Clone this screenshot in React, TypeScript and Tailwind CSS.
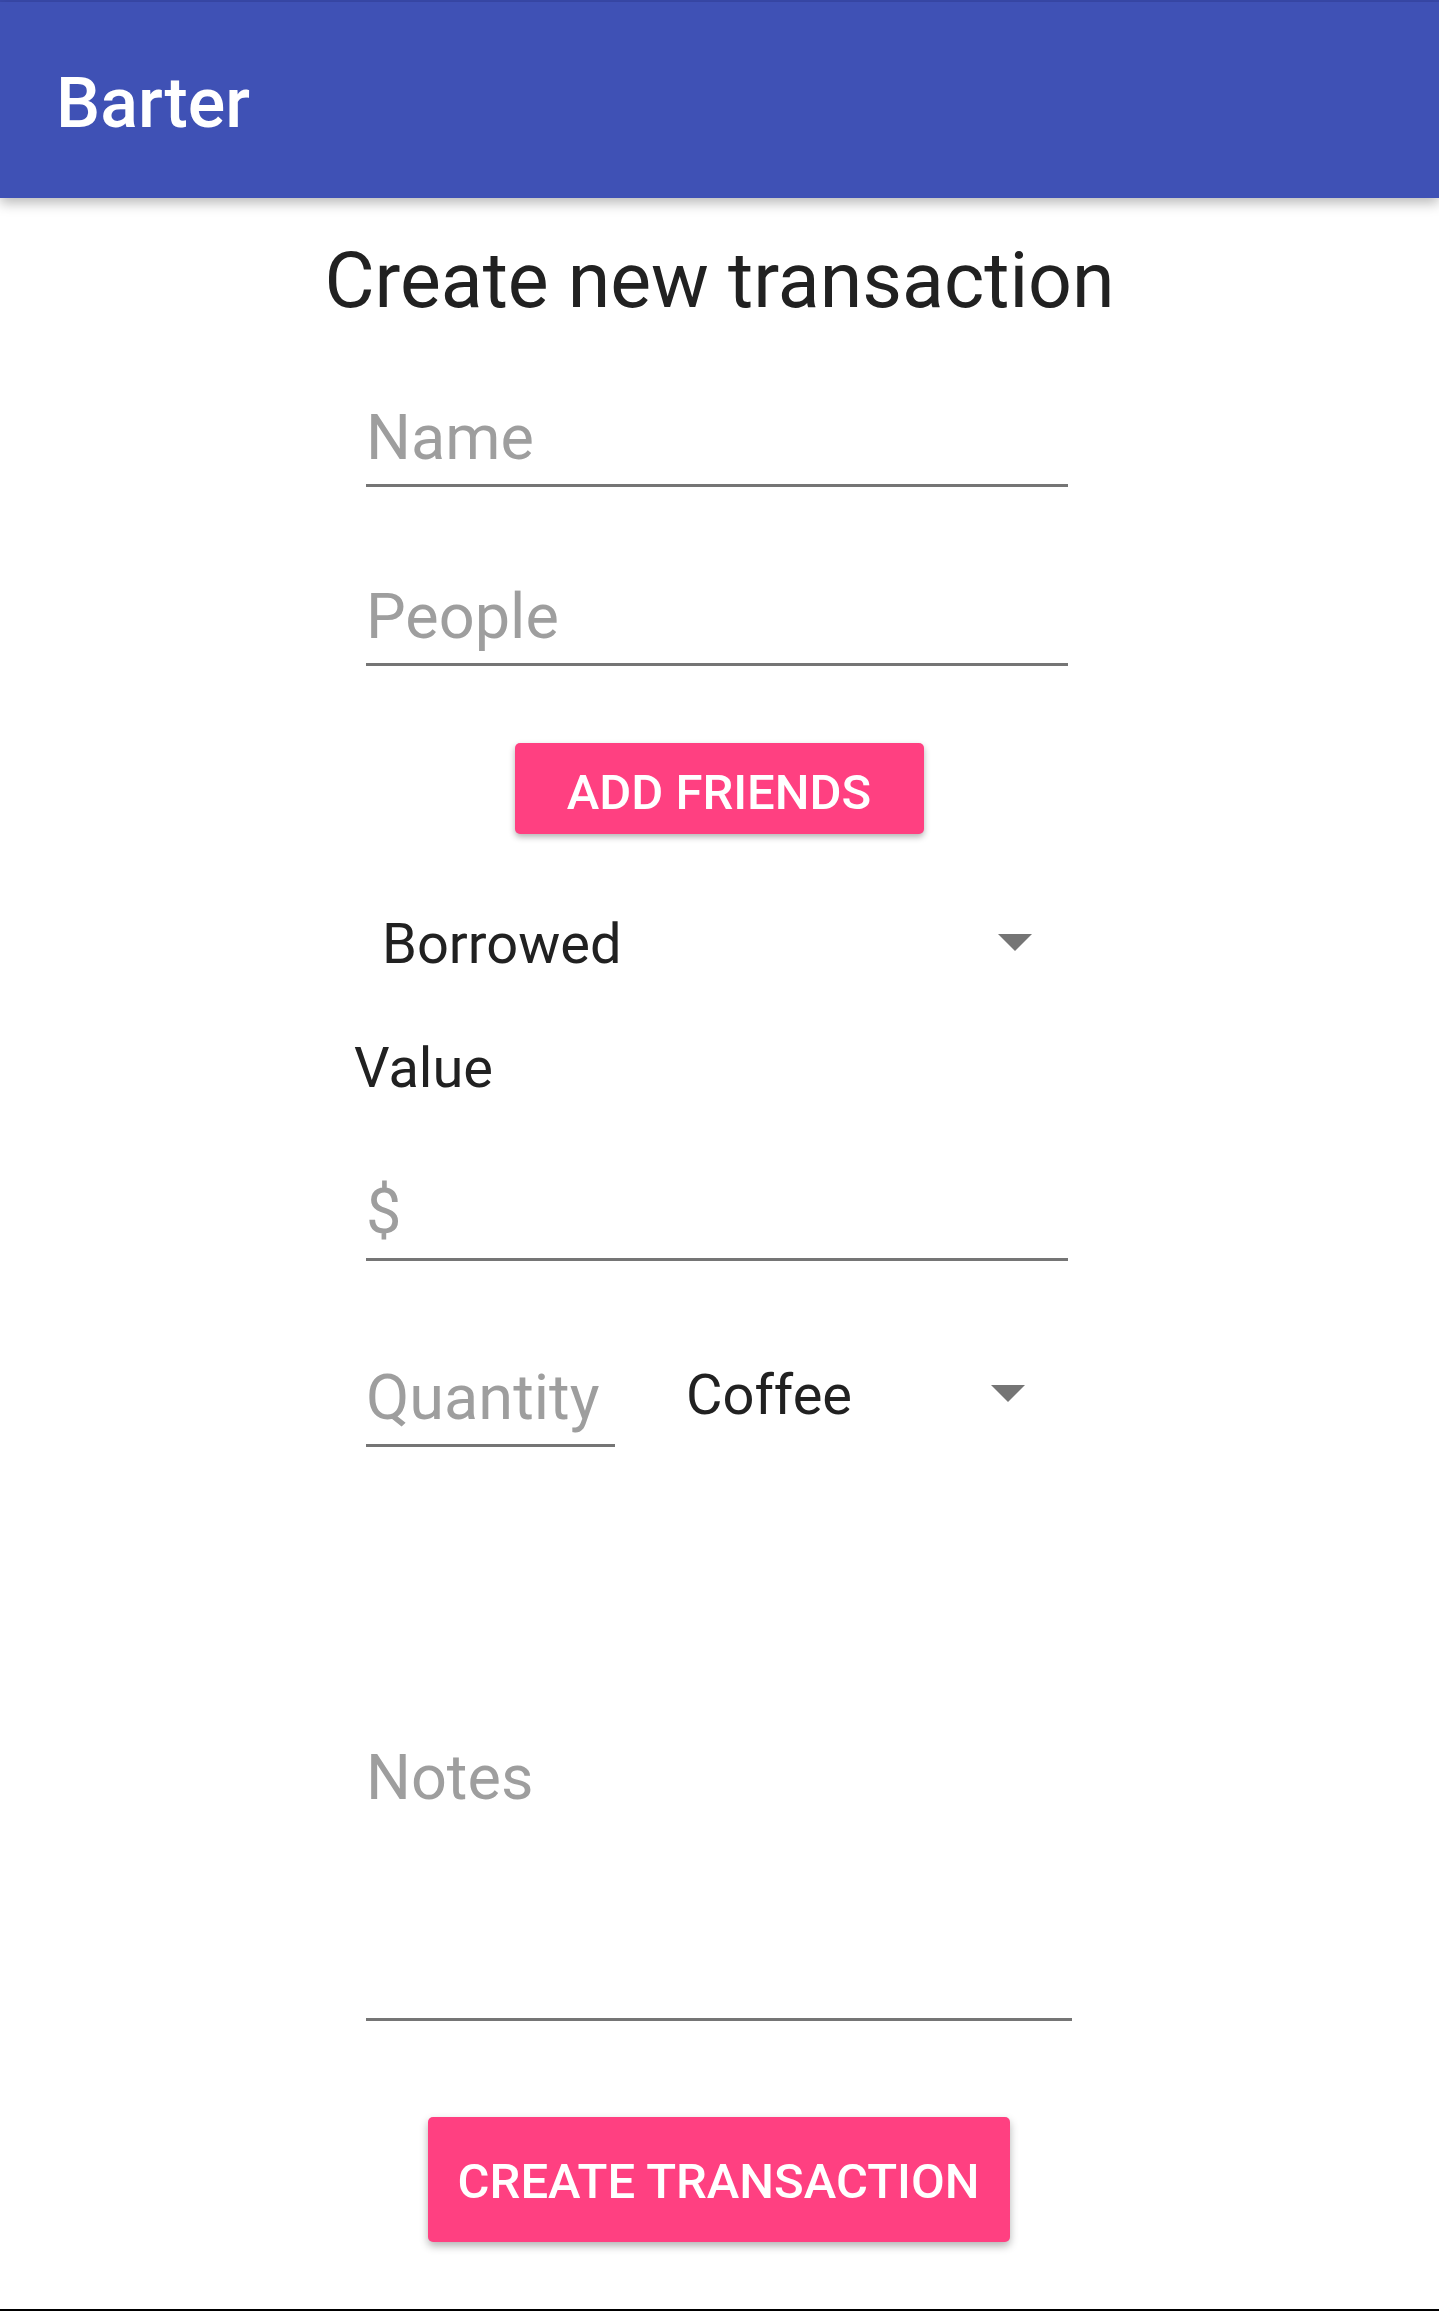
import React from "react";

function Arrow() {
  return (
    <svg width="34" height="17" viewBox="0 0 34 17" className="block">
      <path d="M0 0 L34 0 L17 17 Z" fill="#757575" />
    </svg>
  );
}

function Field({ hint, widthClass }: { hint: string; widthClass: string }) {
  return (
    <div className={`${widthClass} border-b-[3px] border-[#757575] pb-[15px]`}>
      <div className="text-[63px] leading-[63px] text-[#9e9e9e]">{hint}</div>
    </div>
  );
}

export default function App() {
  return (
    <div className="font-['Roboto',sans-serif] bg-white h-[2311px] w-full flex flex-col overflow-hidden">
      <div className="h-[2px] bg-[#3949ab]" />
      <div className="relative z-10 h-[196px] bg-[#3f51b5] shadow-[0_5px_12px_rgba(0,0,0,0.28)] pl-[56px] pt-[66px]">
        <div className="text-white text-[70px] leading-[70px] font-medium">Barter</div>
      </div>

      <div className="mt-[45px] text-center text-[77px] leading-[77px] text-[#212121]">
        Create new transaction
      </div>

      <div className="ml-[366px] w-[702px] flex flex-col">
        <div className="mt-[86px]">
          <Field hint="Name" widthClass="w-full" />
        </div>
        <div className="mt-[98px]">
          <Field hint="People" widthClass="w-full" />
        </div>

        <div className="mt-[77px] flex justify-center pl-[4px]">
          <button className="w-[409px] h-[91px] pt-[8px] leading-[83px] bg-[#ff4081] text-white text-[49px] font-medium rounded-[5px] shadow-[0_3px_6px_rgba(0,0,0,0.3)]">
            ADD FRIENDS
          </button>
        </div>

        <div className="mt-[82px] flex items-start justify-between">
          <div className="pl-[16px] text-[56px] leading-[56px] text-[#212121]">Borrowed</div>
          <div className="mt-[18px] mr-[36px]">
            <Arrow />
          </div>
        </div>

        <div className="mt-[68px] -ml-[12px] text-[56px] leading-[56px] text-[#212121]">Value</div>

        <div className="mt-[84px]">
          <Field hint="$" widthClass="w-full" />
        </div>

        <div className="mt-[105px] flex items-start">
          <Field hint="Quantity" widthClass="w-[249px]" />
          <div className="ml-[71px] mt-[1px] flex-1 flex items-start justify-between">
            <div className="text-[56px] leading-[56px] text-[#212121]">Coffee</div>
            <div className="mt-[18px] mr-[43px]">
              <Arrow />
            </div>
          </div>
        </div>

        <div className="mt-[299px] w-[706px]">
          <div className="border-b-[3px] border-[#757575] pb-[209px]">
            <div className="text-[63px] leading-[63px] text-[#9e9e9e]">Notes</div>
          </div>
        </div>

        <div className="mt-[96px] flex justify-center pl-[3px]">
          <button className="w-[582px] h-[125px] pt-[5px] leading-[120px] bg-[#ff4081] text-white text-[49px] font-medium rounded-[5px] shadow-[0_4px_8px_rgba(0,0,0,0.3)]">
            CREATE TRANSACTION
          </button>
        </div>
      </div>

      <div className="mt-auto h-[2px] bg-black" />
    </div>
  );
}
